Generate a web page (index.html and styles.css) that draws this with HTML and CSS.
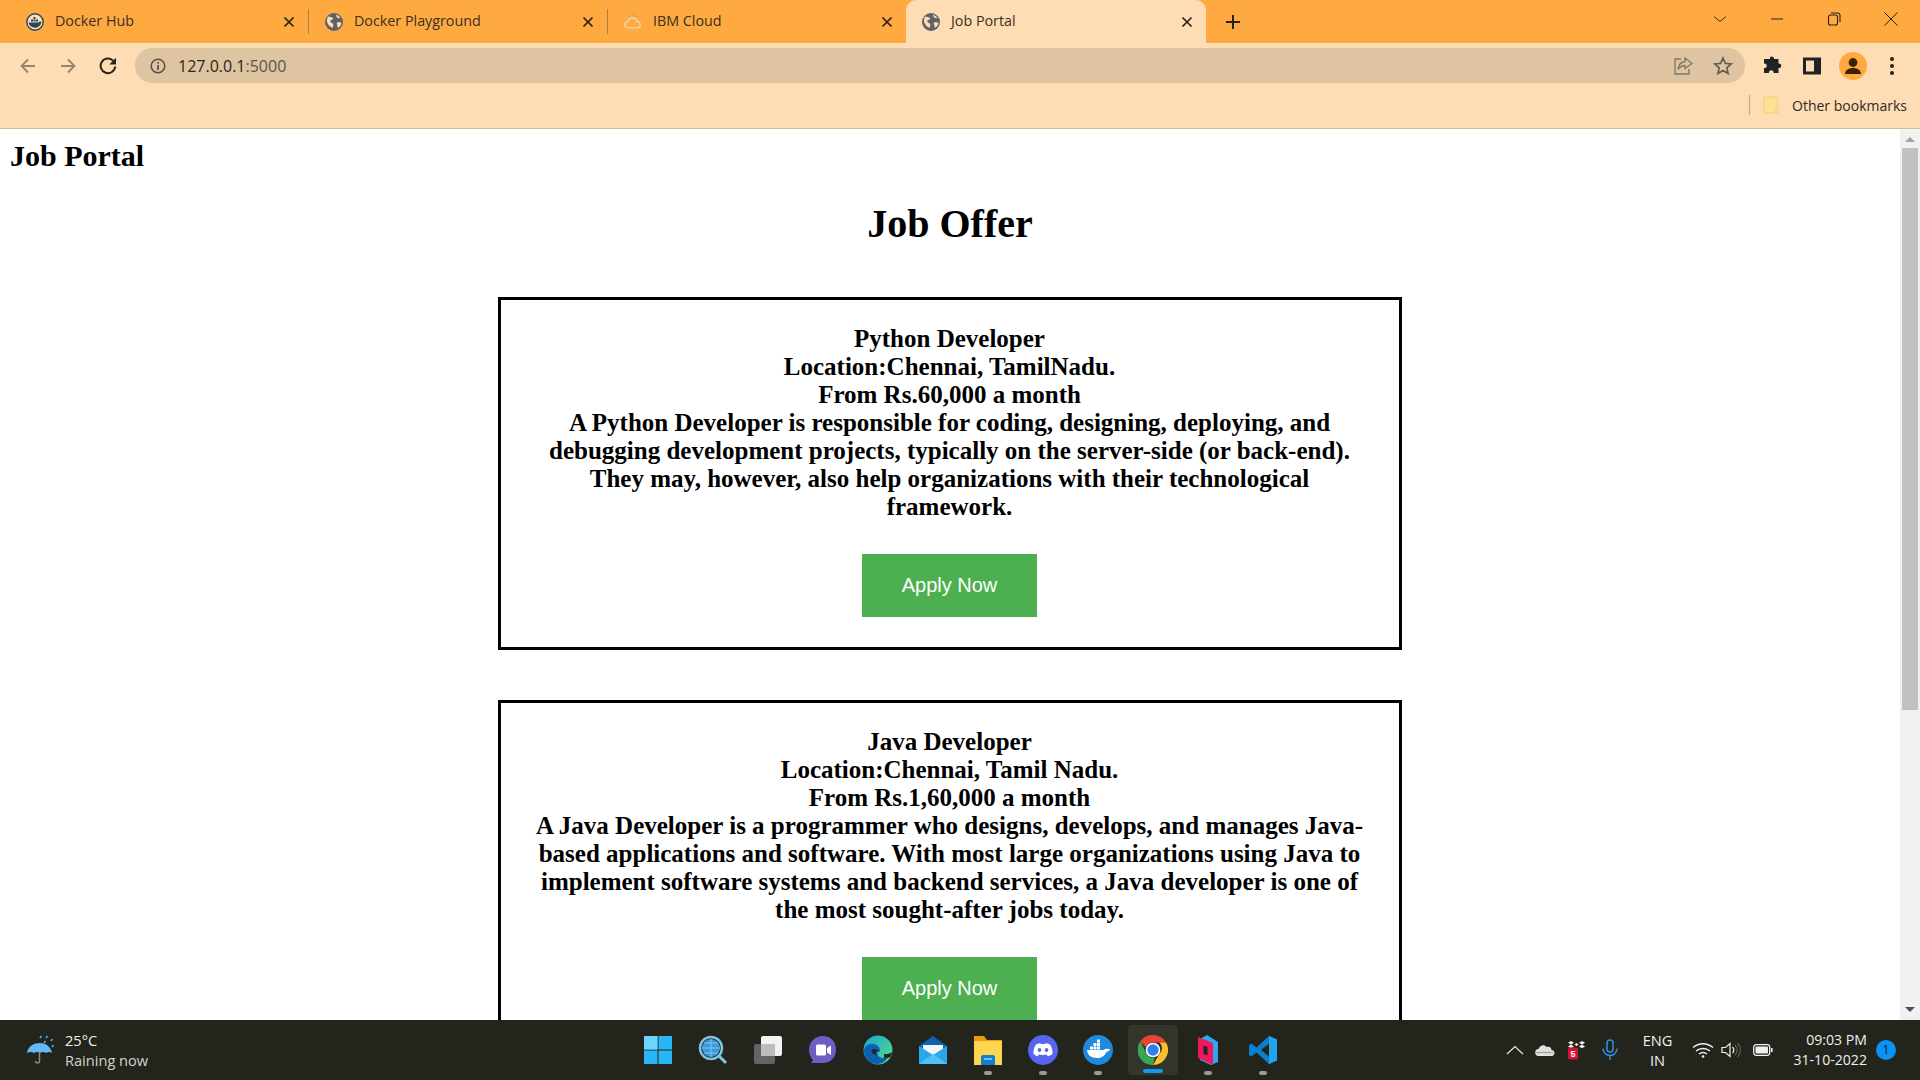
FILE: index.html
```html
<!DOCTYPE html>
<html lang="en">

<head>
    <meta charset="UTF-8">
    <title>Job Portal</title>
    <link rel="stylesheet" href="styles.css">
</head>

<body>
    <svg class="defs" width="0" height="0">
        <symbol id="globe" viewBox="0 0 18 18">
            <circle cx="9" cy="9" r="9" fill="#5f6368" />
            <path d="M3 3.500c2 .2 3.500 1 4.800 1.200.8.800-.3 2-1.500 2.300-1 .3-1.300 1.400-.6 2.200.8.800 2 .8 2.500 1.800.4 1-.3 2.500-.6 4-2-1-4.500-2.800-5.400-5.500C1.800 7.500 2 5 3 3.500zM11 2c1.800.2 3.500 1.500 4.300 3-.8.300-2 .2-2.800-.3C11.500 4 11 3 11 2zM12 9.500c1.500-.5 3.500-.5 4.500.2-.3 2-1.500 3.800-3.200 5-.8-.3-1-1.500-1-2.500 0-1-1-1.800-.3-2.700z" fill="#fedcb4" />
        </symbol>
        <symbol id="close" viewBox="0 0 12 12">
            <path d="M1.500 1.500l9 9M10.500 1.500l-9 9" stroke="#26221c" stroke-width="1.700" fill="none" />
        </symbol>
    </svg>

    <div class="tabstrip">
        <div class="tab">
            <svg class="favicon" viewBox="0 0 18 18">
                <circle cx="9" cy="9" r="8.200" fill="#fedcb4" stroke="#24465e" stroke-width="1.400" />
                <path d="M2.500 9.500h10c.5-1 1.800-1.300 3-.8-.5 3.500-3.200 6-6.500 6s-5.800-2-6.500-5.200z" fill="#24465e" />
                <path d="M5 6.500h2v2H5zM7.500 6.500h2v2h-2zM7.500 4h2v2h-2zM10 6.500h2v2h-2z" fill="#24465e" />
            </svg>
            <span class="tab-title">Docker Hub</span>
            <svg class="tab-close"><use href="#close" /></svg>
        </div>
        <i class="tab-sep"></i>
        <div class="tab">
            <svg class="favicon"><use href="#globe" /></svg>
            <span class="tab-title">Docker Playground</span>
            <svg class="tab-close"><use href="#close" /></svg>
        </div>
        <i class="tab-sep"></i>
        <div class="tab">
            <svg class="favicon" viewBox="0 0 20 18">
                <path d="M5 15.500c-2.500 0-4-1.500-4-3.500s1.500-3.500 3.500-3.500C5 6 7.200 4.500 9.500 4.500c2.500 0 4.500 1.500 5 4 2 0 3.500 1.500 3.500 3.500s-1.500 3.500-3.500 3.500z" fill="none" stroke="#f0d9a8" stroke-width="1.500" />
                <path d="M10 .5v2M4.500 2l1 1.500M15 2l-1 1.500" stroke="#6fb4b0" stroke-width="1.200" />
            </svg>
            <span class="tab-title">IBM Cloud</span>
            <svg class="tab-close"><use href="#close" /></svg>
        </div>
        <div class="tab tab-active">
            <svg class="favicon"><use href="#globe" /></svg>
            <span class="tab-title">Job Portal</span>
            <svg class="tab-close"><use href="#close" /></svg>
        </div>
        <svg class="new-tab" viewBox="0 0 16 16">
            <path d="M8 1v14M1 8h14" stroke="#26221c" stroke-width="2" />
        </svg>
        <div class="window-btns">
            <svg class="win-btn" viewBox="0 0 14 14">
                <path d="M1 4.500l6 5 6-5" stroke="#333" fill="none" />
            </svg>
            <svg class="win-btn" viewBox="0 0 14 14">
                <path d="M1 7h12" stroke="#222" stroke-width="1" />
            </svg>
            <svg class="win-btn" viewBox="0 0 14 14">
                <rect x="1.500" y="3" width="9" height="10" rx="2" fill="none" stroke="#222" stroke-width="1.100" />
                <path d="M4 1h6.500a2.500 2.500 0 0 1 2.500 2.500V10" fill="none" stroke="#222" stroke-width="1.100" />
            </svg>
            <svg class="win-btn" viewBox="0 0 14 14">
                <path d="M.5.5l13 13M13.500.5l-13 13" stroke="#222" stroke-width="1" />
            </svg>
        </div>
    </div>

    <div class="toolbar">
        <svg class="nav-icon" viewBox="0 0 18 18">
            <path d="M16 9H3M9 2.500L2.500 9 9 15.500" stroke="#95856f" stroke-width="1.800" fill="none" />
        </svg>
        <svg class="nav-icon" viewBox="0 0 18 18">
            <path d="M2 9h13M9 2.500L15.500 9 9 15.500" stroke="#95856f" stroke-width="1.800" fill="none" />
        </svg>
        <svg class="nav-icon" viewBox="0 0 18 18">
            <path d="M16.200 9.500A7.300 7.300 0 1 1 14.200 3.800" stroke="#26221c" stroke-width="2" fill="none" />
            <path d="M17 .8v6.700h-6.700z" fill="#26221c" />
        </svg>
        <div class="omnibox">
            <svg class="info-icon" viewBox="0 0 16 16">
                <circle cx="8" cy="8" r="6.800" fill="none" stroke="#54504a" stroke-width="1.500" />
                <path d="M8 7v5M8 4v1.700" stroke="#54504a" stroke-width="1.700" />
            </svg>
            <span class="url">127.0.0.1<span class="url-port">:5000</span></span>
            <svg class="omni-icon" viewBox="0 0 20 20">
                <path d="M8 3H2v15h14v-5" stroke="#7d7668" stroke-width="1.300" fill="none" />
                <path d="M12 2l7 5.500-7 5V9.500c-3 0-5 1-7 4 .5-4 3-7.500 7-8z" stroke="#7d7668" stroke-width="1.300" fill="none" />
            </svg>
            <svg class="omni-icon omni-star" viewBox="0 0 20 20">
                <path d="M10 2l2.400 5.400 5.800.6-4.400 3.900 1.300 5.700-5.100-3-5.100 3 1.300-5.700L1.800 8l5.800-.6z" stroke="#625e56" stroke-width="1.700" fill="none" />
            </svg>
        </div>
        <svg class="tool-icon puzzle" viewBox="0 0 20 20">
            <path d="M8 1.500a2.200 2.200 0 0 1 4 1.500h4.500v4.500a2.300 2.300 0 1 1 0 4.500v5h-5a2.300 2.300 0 1 0-4.500 0H2v-5a2.300 2.300 0 1 0 0-4.500V3h6z" fill="#1f2328" />
        </svg>
        <svg class="tool-icon panel" viewBox="0 0 20 20">
            <path d="M1 1.500h18v17H1zM4 4.500v11h8v-11z" fill="#1f2328" fill-rule="evenodd" />
        </svg>
        <svg class="avatar" viewBox="0 0 28 28">
            <circle cx="14" cy="14" r="14" fill="#ffa93f" />
            <circle cx="14" cy="10.500" r="4.400" fill="#3c2204" />
            <path d="M6 22c0-4 4-6 8-6s8 2 8 6z" fill="#3c2204" />
        </svg>
        <div class="kebab"><i></i><i></i><i></i></div>
    </div>

    <div class="bookmarks">
        <i class="bm-sep"></i>
        <svg class="bm-folder" viewBox="0 0 16 18">
            <path d="M1 2a1 1 0 0 1 1-1h11a1 1 0 0 1 1 1v15H2a1 1 0 0 1-1-1z" fill="#fde293" stroke="#f5d070" />
            <path d="M12.500 17v-3h2.500v3z" fill="#fde293" stroke="#f5d070" />
        </svg>
        <span class="bm-text">Other bookmarks</span>
    </div>

    <div class="viewport">
        <main class="page">
            <h2 class="site-title">Job Portal</h2>
            <h1 class="page-title">Job Offer</h1>

            <section class="job-card">
                <h3 class="job-text">Python Developer<br>
                    Location:Chennai, TamilNadu.<br>
                    From Rs.60,000 a month<br>
                    A Python Developer is responsible for coding, designing, deploying, and debugging development projects, typically on the server-side (or back-end). They may, however, also help organizations with their technological framework.</h3>
                <a class="apply-btn">Apply Now</a>
            </section>

            <section class="job-card">
                <h3 class="job-text">Java Developer<br>
                    Location:Chennai, Tamil Nadu.<br>
                    From Rs.1,60,000 a month<br>
                    A Java Developer is a programmer who designs, develops, and manages Java-based applications and software. With most large organizations using Java to implement software systems and backend services, a Java developer is one of the most sought-after jobs today.</h3>
                <a class="apply-btn">Apply Now</a>
            </section>
        </main>
        <div class="scrollbar">
            <i class="arrow-up"></i>
            <div class="scroll-track"><div class="scroll-thumb"></div></div>
            <i class="arrow-down"></i>
        </div>
    </div>

    <footer class="taskbar">
        <div class="weather">
            <svg class="weather-icon" viewBox="0 0 30 30">
                <path d="M1 18C2 11 8 8 14 8s11 4 12 10c-2-1.500-4-1.500-6 0-2-1.500-4-1.500-6 0-2-1.500-4-1.500-6 0-2-1.500-5-1.500-7 0z" fill="#63b8f5" />
                <path d="M13.500 17v9a2 2 0 0 1-4 0" stroke="#8b8b85" stroke-width="1.500" fill="none" />
                <path d="M14 3l1.500-2M20 3l1.500-2M18 8l1.500-2M25 6l1.500-2M26 12l1.500-2" stroke="#4aa6ec" stroke-width="1.800" />
            </svg>
            <div class="weather-text">
                <span class="temp">25°C</span>
                <span class="weather-desc">Raining now</span>
            </div>
        </div>

        <div class="task-icons">
            <div class="task-item">
                <svg class="task-icon" viewBox="0 0 30 30">
                    <path d="M1 1h13.500v13.500H1zM15.500 1H29v13.500H15.500zM1 15.500h13.500V29H1zM15.500 15.500H29V29H15.500z" fill="#29b6f6" />
                    <path d="M1 1h13.500v13.500H1z" fill="#6fd3fb" />
                </svg>
            </div>
            <div class="task-item">
                <svg class="task-icon" viewBox="0 0 30 30">
                    <circle cx="13" cy="13" r="9" fill="#3a9ad9" />
                    <path d="M13 4v18M4 13h18M6 8h14M6 18h14" stroke="#8fd0f5" stroke-width=".8" />
                    <circle cx="13" cy="13" r="11" fill="none" stroke="#7fc4de" stroke-width="2.500" />
                    <path d="M21 21l7 7" stroke="#7fc4de" stroke-width="3" />
                </svg>
            </div>
            <div class="task-item">
                <svg class="task-icon" viewBox="0 0 30 30">
                    <rect x="8" y="1" width="21" height="20" rx="2" fill="#f2f2f2" />
                    <rect x="1" y="9" width="21" height="20" rx="2" fill="#6a6a6a" opacity=".92" />
                    <rect x="8" y="9" width="14" height="12" fill="#bdbdbd" />
                </svg>
            </div>
            <div class="task-item">
                <svg class="task-icon" viewBox="0 0 30 30">
                    <path d="M15 1c8 0 13 6 13 13.500S23 28 15 28H3l2-3c-2.500-2.500-4-6-4-10.500C1 7 7 1 15 1z" fill="#6b5fc4" />
                    <rect x="8" y="9.500" width="10" height="11" rx="1.500" fill="#fff" />
                    <path d="M19 13l4-2.500v9.500L19 17.500z" fill="#fff" />
                </svg>
            </div>
            <div class="task-item">
                <svg class="task-icon" viewBox="0 0 30 30">
                    <defs>
                        <linearGradient id="edgeTop" x1="0" y1="0" x2="1" y2="1">
                            <stop offset="0" stop-color="#1aa3d8" />
                            <stop offset="1" stop-color="#5be07c" />
                        </linearGradient>
                    </defs>
                    <circle cx="15" cy="15" r="14.500" fill="url(#edgeTop)" />
                    <path d="M1 15c1-5 6-7 10-6 4 1 6 4 6 6 0 1.500-1 2.500-2.500 2.500-.5 3 2 5.500 6 5.500 2 0 3.500-.5 5-1.500-2.500 4.500-6.500 7.500-11 7.500C6 29.500.5 23 1 15z" fill="#0d62b0" />
                    <path d="M11.500 14c2 0 3.500.8 4 2-2.500 0-3 2-2 4.500-3-1-5-3-5-5 0-.8 1.500-1.500 3-1.500zM21 19c3 .3 6-.3 8-2 0 1.500-.5 3-1.500 5-2 1-4.500 1.300-6.500 1z" fill="#23242a" />
                </svg>
            </div>
            <div class="task-item">
                <svg class="task-icon" viewBox="0 0 30 30">
                    <path d="M15 1l14 10v18H1V11z" fill="#0d62b0" />
                    <path d="M5 10h20v6l-10 6-10-6z" fill="#f4f7fa" />
                    <path d="M1 11l14 9 14-9v18H1z" fill="#28a8ea" />
                    <path d="M1 29l14-10 14 10z" fill="#50c2f2" />
                </svg>
            </div>
            <div class="task-item running">
                <svg class="task-icon" viewBox="0 0 30 30">
                    <path d="M1 1h10l3 4h15v24H1z" fill="#e3a008" />
                    <path d="M1 6h28v24H1z" fill="#ffd54f" />
                    <path d="M8 22c0-1 .8-2 2-2h10c1.200 0 2 1 2 2v8H8z" fill="#0e7fd6" />
                    <path d="M11 24h8" stroke="#c8e6fb" stroke-width="1.200" />
                </svg>
            </div>
            <div class="task-item running">
                <svg class="task-icon" viewBox="0 0 30 30">
                    <circle cx="15" cy="15" r="15" fill="#5865f2" />
                    <path d="M8 9.500c2-1 3.500-1.300 4.500-1.300l.5 1c1.300-.2 2.700-.2 4 0l.5-1c1 0 2.500.3 4.500 1.300 2 3 2.800 6 2.500 9.500-1.700 1.300-3.300 2-4.800 2.300l-1-1.700c-2.500.6-5.500.6-8 0l-1 1.700C8.700 21 7 20.300 5.500 19c-.3-3.500.5-6.500 2.500-9.500z" fill="#fff" />
                    <ellipse cx="11.500" cy="15" rx="1.800" ry="2.100" fill="#5865f2" />
                    <ellipse cx="18.500" cy="15" rx="1.800" ry="2.100" fill="#5865f2" />
                </svg>
            </div>
            <div class="task-item running">
                <svg class="task-icon" viewBox="0 0 30 30">
                    <circle cx="15" cy="15" r="15" fill="#1d8ae0" />
                    <path d="M4 15h17c.5-1 2-1.800 3.500-1 .8-.3 1.800-.1 2.500.4-1 1.700-2 2.300-3.500 2.300-1.500 4-5 6.300-9.500 6.300-6 0-9.500-3-10-8z" fill="#fff" />
                    <path d="M7 11.500h3v3H7zM10.500 11.500h3v3h-3zM14 11.500h3v3h-3zM10.500 8h3v3h-3zM14 8h3v3h-3zM14 4.500h3v3h-3z" fill="#fff" />
                </svg>
            </div>
            <div class="task-item task-active">
                <svg class="task-icon" viewBox="0 0 30 30">
                    <path d="M15 0a15 15 0 0 1 13 7.500H15a7.500 7.500 0 0 0-7 5L2.300 6.300A15 15 0 0 1 15 0z" fill="#ea4335" />
                    <path d="M28 7.500A15 15 0 0 1 15 30l6.500-11.200a7.500 7.500 0 0 0 0-11.300z" fill="#fbc02d" />
                    <path d="M15 30A15 15 0 0 1 2.300 6.300L8.500 18.700a7.500 7.500 0 0 0 8 3.800z" fill="#34a853" />
                    <circle cx="15" cy="15" r="7.300" fill="#fff" />
                    <circle cx="15" cy="15" r="5.700" fill="#2f80ed" />
                </svg>
            </div>
            <div class="task-item running">
                <svg class="task-icon" viewBox="0 0 30 30">
                    <path d="M14 0l11 7v20l-7 3-11-5V4z" fill="#29a9f0" />
                    <path d="M5 2l15 6v22L5 23z" fill="#f0185c" />
                    <path d="M10.500 10.500l4 1.600v8.400l-4-1.600z" fill="#23242a" />
                </svg>
            </div>
            <div class="task-item running">
                <svg class="task-icon" viewBox="0 0 30 30">
                    <path d="M21 1l8 3.500v21L21 29 8.500 17.500l-5 4L1 20v-10l2.500-1.500 5 4zM21 8.500L13 15l8 6.500z" fill="#0b7fcc" fill-rule="evenodd" />
                    <path d="M21 1l8 3.500v21L21 29z" fill="#22a3ee" />
                </svg>
            </div>
        </div>

        <div class="tray">
            <svg class="tray-icon" viewBox="0 0 18 10" width="18" height="10">
                <path d="M1 9l8-7.500L17 9" stroke="#e8e8e4" stroke-width="1.200" fill="none" />
            </svg>
            <svg class="tray-icon tray-cloud" viewBox="0 0 20 14" width="20" height="14">
                <path d="M4 13a3.500 3.500 0 0 1-.5-7C5 2 9.500 1 11.500 4c3-1 5 .5 5 3 2 0 3 1.500 3 3s-1 3-3 3z" fill="#e2e2e0" />
                <path d="M1 9.500h17" stroke="#a5a5a2" stroke-width="1.500" />
            </svg>
            <svg class="tray-icon tray-dropbox" viewBox="0 0 20 20" width="20" height="20">
                <path d="M3 1l3 1.800L3 4.600 0 2.800zM3 4.600l3 1.800-3 1.800-3-1.800zM14 1l3 1.800-3 1.800-3-1.800zM14 4.600l3 1.800-3 1.800-3-1.800zM8.500 3l2 1.500-2 1.500-2-1.500z" fill="#f0f0ee" />
                <rect x="0" y="7.500" width="10" height="12" rx="1.500" fill="#d5112f" />
                <text x="5" y="17" class="tray-badge-num">5</text>
            </svg>
            <svg class="tray-icon tray-mic" viewBox="0 0 16 22" width="16" height="22">
                <rect x="5" y="1" width="6" height="12" rx="3" fill="none" stroke="#2f8fe0" stroke-width="1.500" />
                <path d="M1 9.500a7 7 0 0 0 14 0M8 16.500V21" fill="none" stroke="#2f8fe0" stroke-width="1.500" />
            </svg>
            <div class="lang">ENG<br>IN</div>
            <svg class="tray-icon tray-wifi" viewBox="0 0 22 16" width="22" height="16">
                <path d="M1 5.500c6-5 14-5 20 0M4 9c4-3.300 10-3.300 14 0M7 12c2.300-1.700 5.700-1.700 8 0" stroke="#f0f0ee" stroke-width="1.500" fill="none" />
                <circle cx="11" cy="14.500" r="1.300" fill="#f0f0ee" />
            </svg>
            <svg class="tray-icon tray-vol" viewBox="0 0 22 16" width="22" height="16">
                <path d="M1 5.500h3.500L9 1.500v13l-4.500-4H1z" stroke="#f0f0ee" stroke-width="1.200" fill="none" />
                <path d="M11.500 5a4 4 0 0 1 0 6" stroke="#f0f0ee" stroke-width="1.200" fill="none" />
                <path d="M14 3a7 7 0 0 1 0 10M16.500 1a10 10 0 0 1 0 14" stroke="#66665f" stroke-width="1.100" fill="none" />
            </svg>
            <svg class="tray-icon tray-battery" viewBox="0 0 20 12" width="20" height="12">
                <rect x=".7" y=".7" width="16" height="10.600" rx="2.500" fill="none" stroke="#f0f0ee" stroke-width="1.300" />
                <rect x="2.500" y="2.500" width="12.500" height="7" rx="1" fill="#f0f0ee" />
                <rect x="18" y="4" width="1.600" height="4" fill="#f0f0ee" />
            </svg>
            <div class="clock">09:03 PM<br>31-10-2022</div>
            <span class="notif">1</span>
        </div>
    </footer>
</body>

</html>
```
FILE: styles.css
```css
* {
    box-sizing: border-box;
}

body {
    margin: 0;
    width: 1920px;
    height: 1080px;
    overflow: hidden;
    display: flex;
    flex-direction: column;
    font-family: "Open Sans", "Noto Sans", sans-serif;
    background-color: #fff;
}

.defs {
    display: none;
}

/* browser chrome */
.tabstrip {
    display: flex;
    align-items: center;
    flex: none;
    height: 43px;
    padding-left: 10px;
    background-color: #ffaa40;
}

.tab {
    display: flex;
    align-items: center;
    width: 298px;
    height: 43px;
    padding: 0 13px 0 16px;
    color: #3a3024;
    font-size: 14.300px;
}

.tab-sep {
    width: 1px;
    height: 25px;
    background-color: #a8804a;
}

.tab-active {
    width: 300px;
    margin-left: 0;
    background-color: #fedcb4;
    border-radius: 10px 10px 0 0;
}

.favicon {
    flex: none;
    width: 18px;
    height: 18px;
    margin-right: 11px;
}

.tab-title {
    flex: 1;
    padding-bottom: 2px;
    white-space: nowrap;
}

.tab-close {
    flex: none;
    width: 12px;
    height: 12px;
}

.new-tab {
    flex: none;
    width: 16px;
    height: 16px;
    margin-left: 19px;
}

.window-btns {
    display: flex;
    align-items: center;
    margin-left: auto;
    padding-right: 22px;
    gap: 43px;
    transform: translateY(-3px);
}

.win-btn {
    width: 14px;
    height: 14px;
}

.toolbar {
    display: flex;
    align-items: center;
    flex: none;
    height: 45px;
    padding: 5px 0 5px 19px;
    background-color: #fedcb4;
}

.nav-icon {
    flex: none;
    width: 18px;
    height: 18px;
    margin-right: 22px;
}

.omnibox {
    display: flex;
    align-items: center;
    flex: none;
    width: 1610px;
    height: 35px;
    margin-left: -4px;
    padding: 0 0 0 15px;
    border-radius: 18px;
    background-color: #dec4a0;
}

.info-icon {
    flex: none;
    width: 16px;
    height: 16px;
    margin-right: 12px;
}

.url {
    flex: 1;
    color: #2a2620;
    font-size: 16px;
}

.url-port {
    color: #5b5449;
}

.omni-icon {
    flex: none;
    width: 20px;
    height: 20px;
}

.omni-star {
    margin: 0 12px 0 20px;
}

.tool-icon {
    flex: none;
    width: 20px;
    height: 20px;
}

.puzzle {
    margin-left: 17px;
}

.panel {
    margin-left: 20px;
}

.avatar {
    flex: none;
    width: 28px;
    height: 28px;
    margin-left: 17px;
}

.kebab {
    display: flex;
    flex-direction: column;
    gap: 3px;
    margin-left: 23px;
}

.kebab i {
    display: block;
    width: 4px;
    height: 4px;
    border-radius: 50%;
    background-color: #26221c;
}

.bookmarks {
    display: flex;
    align-items: center;
    justify-content: flex-end;
    flex: none;
    height: 41px;
    padding: 0 13px 6px 0;
    border-bottom: 1px solid #d2bc9c;
    background-color: #fedcb4;
}

.bm-sep {
    width: 1px;
    height: 20px;
    margin-right: 13px;
    background-color: #b9a68d;
}

.bm-folder {
    width: 16px;
    height: 18px;
    margin-right: 13px;
}

.bm-text {
    color: #2e2a24;
    font-size: 14px;
    white-space: nowrap;
}

/* page */
.viewport {
    display: flex;
    flex: 1;
    min-height: 0;
}

.page {
    flex: 1;
    height: 891px;
    overflow: hidden;
    padding: 0 9px;
    color: #000;
    font-family: "Liberation Serif", "Times New Roman", serif;
}

.site-title {
    margin: 9px 0 0 1px;
    font-size: 30px;
    line-height: 35px;
}

.page-title {
    margin: 28px 0 50px;
    font-size: 40px;
    line-height: 46px;
    text-align: center;
}

.job-card {
    width: 904px;
    margin: 0 auto 50px;
    padding: 25px 31px 30px 30px;
    border: 3px solid #000;
    text-align: center;
}

.job-text {
    margin: 0 0 33px;
    font-size: 25px;
    line-height: 28px;
    font-weight: bold;
}

.apply-btn {
    display: block;
    width: 175px;
    height: 63px;
    margin: 0 auto;
    background-color: #4caf50;
    color: #fff;
    font-family: "Liberation Sans", Arial, sans-serif;
    font-size: 20px;
    line-height: 63px;
    text-align: center;
}

.scrollbar {
    display: flex;
    flex-direction: column;
    align-items: center;
    flex: none;
    width: 20px;
    background-color: #f1f1f1;
}

.arrow-up,
.arrow-down {
    flex: none;
    width: 0;
    height: 0;
    border-left: 5px solid transparent;
    border-right: 5px solid transparent;
}

.arrow-up {
    margin: 8px 0 6px;
    border-bottom: 5px solid #a3a3a3;
}

.arrow-down {
    margin: 6px 0 8px;
    border-top: 5px solid #505050;
}

.scroll-track {
    flex: 1;
    width: 100%;
    padding: 0 2px;
}

.scroll-thumb {
    height: 562px;
    background-color: #c1c1c1;
}

/* windows taskbar */
.taskbar {
    display: grid;
    grid-template-columns: 1fr auto 1fr;
    align-items: center;
    flex: none;
    height: 60px;
    background-color: #23241c;
    color: #f0f0ee;
}

.weather {
    display: flex;
    align-items: center;
    padding-left: 26px;
}

.weather-icon {
    flex: none;
    width: 30px;
    height: 30px;
    margin-right: 9px;
}

.weather-text {
    display: flex;
    flex-direction: column;
    margin-top: -1px;
    font-size: 14.600px;
    line-height: 20px;
}

.weather-desc {
    color: #d4d4d0;
}

.task-icons {
    display: flex;
    gap: 5px;
}

.task-item {
    position: relative;
    display: flex;
    align-items: center;
    justify-content: center;
    width: 50px;
    height: 50px;
}

.task-icon {
    width: 30px;
    height: 30px;
}

.running::after,
.task-active::after {
    content: "";
    position: absolute;
    bottom: 0;
    left: 50%;
    width: 8px;
    height: 4px;
    margin-left: -4px;
    border-radius: 2px;
    background-color: #9b9b96;
}

.task-active {
    border: 1px solid #35362c;
    border-radius: 4px;
    background-color: #33342a;
}

.task-active::after {
    width: 20px;
    margin-left: -10px;
    bottom: 1px;
    background-color: #0a9bf5;
}

.tray {
    display: flex;
    align-items: center;
    justify-content: flex-end;
    padding-right: 24px;
}

.tray-badge-num {
    fill: #fff;
    font-family: "Liberation Sans", Arial, sans-serif;
    font-size: 9px;
    font-weight: bold;
    text-anchor: middle;
}

.tray-cloud {
    margin-left: 11px;
}

.tray-dropbox {
    margin-left: 13px;
}

.tray-mic {
    margin-left: 14px;
}

.lang {
    margin-left: 25px;
    font-size: 14.600px;
    line-height: 20px;
    text-align: center;
}

.tray-wifi {
    margin-left: 20px;
}

.tray-vol {
    margin-left: 7px;
}

.tray-battery {
    margin-left: 10px;
}

.clock {
    margin: 0 9px 0 20px;
    font-size: 14.100px;
    line-height: 20px;
    text-align: right;
}

.notif {
    flex: none;
    width: 20px;
    height: 20px;
    border-radius: 50%;
    background-color: #0a93f5;
    color: #11161c;
    font-size: 12px;
    line-height: 20px;
    text-align: center;
}
```
